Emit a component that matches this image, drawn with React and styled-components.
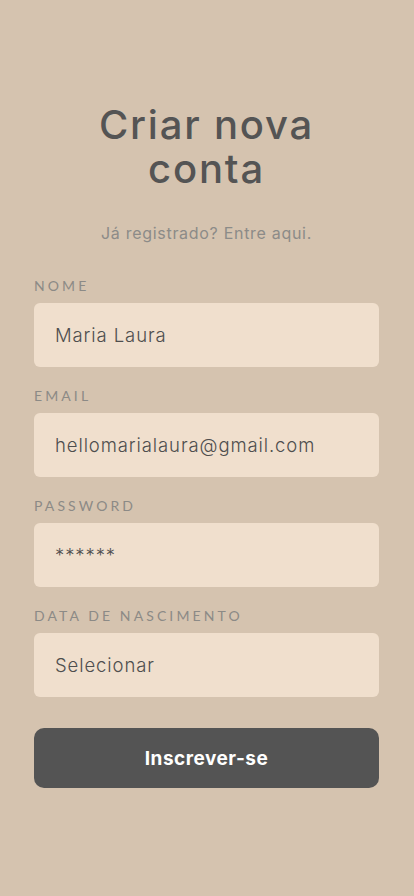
import styled, { createGlobalStyle } from 'styled-components';

const GlobalStyle = createGlobalStyle`
  html, body {
    margin: 0;
    padding: 0;
    background: #d5c3af;
  }
  * {
    box-sizing: border-box;
  }
`;

const Page = styled.main`
  min-height: 896px;
  display: flex;
  flex-direction: column;
  align-items: center;
  padding: 103px 35px 0 34px;
  background: #d5c3af;
`;

const Title = styled.h1`
  margin: 0;
  font-family: Inter, 'Noto Sans', sans-serif;
  font-weight: 500;
  font-size: 40px;
  line-height: 44px;
  color: #545454;
  text-align: center;
  letter-spacing: 1.8px;
`;

const Subtitle = styled.p`
  margin: 31px 0 0;
  font-family: Inter, 'Noto Sans', sans-serif;
  font-size: 16px;
  line-height: 22px;
  color: #8c8b88;
  text-align: center;
  letter-spacing: 0.7px;
`;

const Form = styled.form`
  width: 100%;
  display: flex;
  flex-direction: column;
  gap: 21px;
  margin-top: 34px;
`;

const Field = styled.label`
  display: flex;
  flex-direction: column;
  gap: 9px;
`;

const Label = styled.span`
  font-family: Lato, 'Noto Sans', sans-serif;
  font-size: 14px;
  line-height: 16px;
  letter-spacing: 3.1px;
  color: #8c8a86;
  text-transform: uppercase;
`;

const Input = styled.div`
  height: 64px;
  display: flex;
  align-items: center;
  padding: 0 21px;
  background: #f0dfcd;
  border-radius: 6px;
  font-family: Inter, 'Noto Sans', sans-serif;
  font-weight: 300;
  font-size: 18.5px;
  letter-spacing: 0.9px;
  color: #4e4e4e;
`;

const Button = styled.button`
  margin-top: 10px;
  height: 60px;
  border: none;
  border-radius: 10px;
  background: #545454;
  color: #ffffff;
  font-family: Inter, 'Noto Sans', sans-serif;
  font-weight: 700;
  font-size: 19px;
  letter-spacing: 0.5px;
  cursor: pointer;
`;

const fields = [
  { label: 'Nome', value: 'Maria Laura' },
  { label: 'Email', value: 'hellomarialaura@gmail.com' },
  { label: 'Password', value: '******' },
  { label: 'Data de nascimento', value: 'Selecionar' },
];

export default function App() {
  return (
    <>
      <GlobalStyle />
      <Page>
        <Title>
          Criar nova
          <br />
          conta
        </Title>
        <Subtitle>Já registrado? Entre aqui.</Subtitle>
        <Form onSubmit={(e) => e.preventDefault()}>
          {fields.map((f) => (
            <Field key={f.label}>
              <Label>{f.label}</Label>
              <Input>{f.value}</Input>
            </Field>
          ))}
          <Button type="submit">Inscrever-se</Button>
        </Form>
      </Page>
    </>
  );
}
